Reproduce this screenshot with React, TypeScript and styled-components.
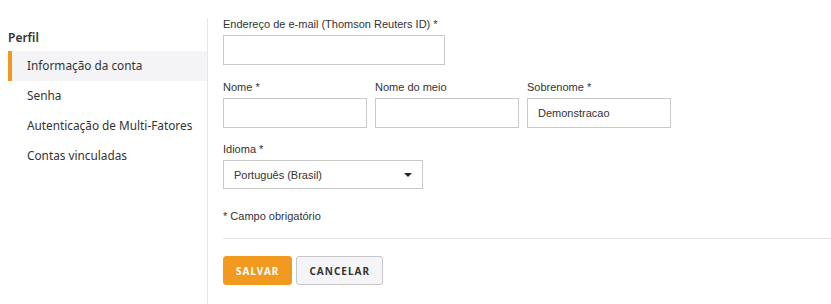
import React from "react";
import styled, { createGlobalStyle } from "styled-components";

const Global = createGlobalStyle`
  html, body { margin: 0; padding: 0; background: #fff; }
  * { box-sizing: border-box; }
`;

const Page = styled.div`
  display: flex;
  width: 831px;
  height: 304px;
  overflow: hidden;
`;

const Sidebar = styled.nav`
  width: 207px;
  flex: none;
  padding: 30px 0 0 8px;
  font-family: "Noto Sans", sans-serif;
  color: #333;
`;

const SideTitle = styled.div`
  font-size: 12px;
  font-weight: 600;
  height: 15px;
  line-height: 15px;
  margin-bottom: 6px;
`;

const SideItem = styled.div<{ $active?: boolean }>`
  height: 30px;
  line-height: 29px;
  font-size: 11.8px;
  white-space: nowrap;
  padding-left: 15px;
  background: ${(p) => (p.$active ? "#f4f4f6" : "transparent")};
  border-left: 4px solid ${(p) => (p.$active ? "#f29a1f" : "transparent")};
`;

const Main = styled.main`
  flex: 1;
  border-left: 1px solid #e6e6e6;
  margin-top: 18px;
  padding: 0 0 0 15px;
  font-family: "Liberation Sans", Arial, sans-serif;
  color: #333;
`;

const Field = styled.div`
  display: flex;
  flex-direction: column;
`;

const Label = styled.label`
  font-size: 11px;
  line-height: 13px;
  height: 13px;
  margin-bottom: 4px;
`;

const Input = styled.div<{ $w: number }>`
  width: ${(p) => p.$w}px;
  height: 30px;
  border: 1px solid #c8c8c8;
  font-size: 11px;
  line-height: 28px;
  padding-left: 10px;
  color: #333;
`;

const Row = styled.div<{ $mt: number }>`
  display: flex;
  gap: 8px;
  margin-top: ${(p) => p.$mt}px;
`;

const Select = styled.div`
  width: 200px;
  height: 29px;
  border: 1px solid #c8c8c8;
  font-size: 11px;
  display: flex;
  align-items: center;
  justify-content: space-between;
  padding: 0 10px 0 10px;
`;

const Caret = styled.span`
  width: 0;
  height: 0;
  border-left: 4px solid transparent;
  border-right: 4px solid transparent;
  border-top: 4px solid #222;
`;

const Note = styled.div`
  font-size: 11px;
  margin-top: 21px;
  height: 13px;
  line-height: 13px;
`;

const Divider = styled.hr`
  border: none;
  border-top: 1px solid #e4e4e4;
  margin: 15px 0 0 0;
`;

const Buttons = styled.div`
  display: flex;
  gap: 4px;
  margin-top: 17px;
`;

const Button = styled.button<{ $primary?: boolean }>`
  height: 29px;
  padding: 0 12px;
  font-family: "Noto Sans", sans-serif;
  font-weight: 700;
  font-size: 10px;
  letter-spacing: 1px;
  border-radius: 3px;
  cursor: pointer;
  color: ${(p) => (p.$primary ? "#fff" : "#333")};
  background: ${(p) => (p.$primary ? "#f29a1f" : "#f5f5f7")};
  border: 1px solid ${(p) => (p.$primary ? "#f29a1f" : "#c8c8cc")};
`;

export default function App() {
  return (
    <>
      <Global />
      <Page>
        <Sidebar>
          <SideTitle>Perfil</SideTitle>
          <SideItem $active>Informação da conta</SideItem>
          <SideItem>Senha</SideItem>
          <SideItem>Autenticação de Multi-Fatores</SideItem>
          <SideItem>Contas vinculadas</SideItem>
        </Sidebar>
        <Main>
          <Field>
            <Label>Endereço de e-mail (Thomson Reuters ID) *</Label>
            <Input $w={222} />
          </Field>
          <Row $mt={16}>
            <Field>
              <Label>Nome *</Label>
              <Input $w={144} />
            </Field>
            <Field>
              <Label>Nome do meio</Label>
              <Input $w={144} />
            </Field>
            <Field>
              <Label>Sobrenome *</Label>
              <Input $w={144}>Demonstracao</Input>
            </Field>
          </Row>
          <Row $mt={15}>
            <Field>
              <Label>Idioma *</Label>
              <Select>
                Português (Brasil)
                <Caret />
              </Select>
            </Field>
          </Row>
          <Note>* Campo obrigatório</Note>
          <Divider />
          <Buttons>
            <Button $primary>SALVAR</Button>
            <Button>CANCELAR</Button>
          </Buttons>
        </Main>
      </Page>
    </>
  );
}
